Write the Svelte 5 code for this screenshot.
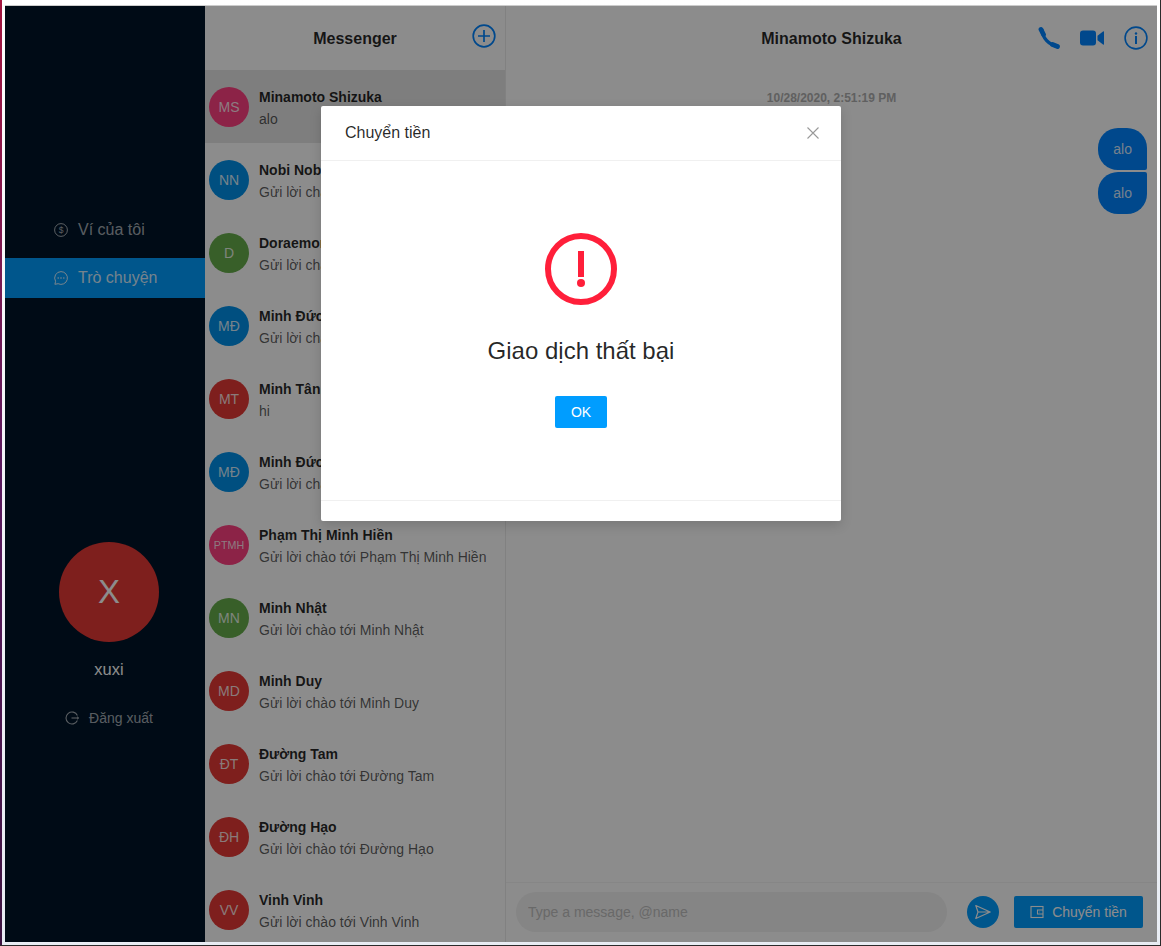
<script>
  const rows = [
    { i: 'MS', n: 'Minamoto Shizuka', m: 'alo', c: 'pink', on: true },
    { i: 'NN', n: 'Nobi Nobita', m: 'Gửi lời chào tới Nobi Nobita', c: 'blue' },
    { i: 'D', n: 'Doraemon', m: 'Gửi lời chào tới Doraemon', c: 'green' },
    { i: 'MĐ', n: 'Minh Đức', m: 'Gửi lời chào tới Minh Đức', c: 'blue' },
    { i: 'MT', n: 'Minh Tân', m: 'hi', c: 'red' },
    { i: 'MĐ', n: 'Minh Đức', m: 'Gửi lời chào tới Minh Đức', c: 'blue' },
    { i: 'PTMH', n: 'Phạm Thị Minh Hiền', m: 'Gửi lời chào tới Phạm Thị Minh Hiền', c: 'pink', small: true },
    { i: 'MN', n: 'Minh Nhật', m: 'Gửi lời chào tới Minh Nhật', c: 'green' },
    { i: 'MD', n: 'Minh Duy', m: 'Gửi lời chào tới Minh Duy', c: 'red' },
    { i: 'ĐT', n: 'Đường Tam', m: 'Gửi lời chào tới Đường Tam', c: 'red' },
    { i: 'ĐH', n: 'Đường Hạo', m: 'Gửi lời chào tới Đường Hạo', c: 'red' },
    { i: 'VV', n: 'Vinh Vinh', m: 'Gửi lời chào tới Vinh Vinh', c: 'red' }
  ];
</script>

<div class="screen">
  <div class="app">
    <aside class="side">
      <nav class="nav">
        <div class="item">
          <svg width="14" height="14" viewBox="0 0 14 14" fill="none" stroke="currentColor"><circle cx="7" cy="7" r="6.4" stroke-width="1"/><text x="7" y="10" font-size="8.5" text-anchor="middle" fill="currentColor" stroke="none" font-family="Liberation Sans">$</text></svg>
          <span>Ví của tôi</span>
        </div>
        <div class="item active">
          <svg width="14" height="14" viewBox="0 0 14 14" fill="none" stroke="currentColor"><path d="M7 .6a6.4 6.4 0 1 1-2.9 12.1L.9 13.3l.7-3A6.4 6.4 0 0 1 7 .6z" stroke-width="1"/><circle cx="4.2" cy="7" r=".8" fill="currentColor" stroke="none"/><circle cx="7" cy="7" r=".8" fill="currentColor" stroke="none"/><circle cx="9.8" cy="7" r=".8" fill="currentColor" stroke="none"/></svg>
          <span>Trò chuyện</span>
        </div>
      </nav>
      <div class="me">
        <div class="me-av">X</div>
        <div class="me-name">xuxi</div>
        <div class="logout">
          <svg width="14" height="14" viewBox="0 0 14 14" fill="none" stroke="currentColor" stroke-width="1.1"><path d="M12.4 4.4A6 6 0 1 0 12.4 9.6"/><path d="M6.5 7h7"/><path d="M12 5.6 13.6 7 12 8.4" stroke-width=".9"/></svg>
          <span>Đăng xuất</span>
        </div>
      </div>
    </aside>

    <section class="list">
      <header class="list-head">
        <h2>Messenger</h2>
        <svg class="plus" width="24" height="24" viewBox="0 0 24 24" fill="none" stroke="#0084ff" stroke-width="1.7"><circle cx="12" cy="12" r="10.8"/><path d="M12 6v12M6 12h12"/></svg>
      </header>
      <div class="rows">
        {#each rows as r}
          <div class="row" class:on={r.on}>
            <div class="av {r.c}" class:small={r.small}>{r.i}</div>
            <div class="txt">
              <div class="name">{r.n}</div>
              <div class="msg">{r.m}</div>
            </div>
          </div>
        {/each}
      </div>
    </section>

    <section class="chat">
      <header class="chat-head">
        <span></span>
        <h2>Minamoto Shizuka</h2>
        <div class="tools">
          <svg width="22" height="22" viewBox="0 0 22 22" fill="none" stroke="#0084ff" stroke-linecap="round"><path d="M4 3C4.500 11 11 18 19 19" stroke-width="3.400"/><path d="M3 2.500 5.500 7.500M14.500 17.500 19.500 19.500" stroke-width="4.800"/></svg>
          <svg width="24" height="16" viewBox="0 0 24 16" fill="#0084ff"><rect x="0" y="0.500" width="16" height="15" rx="3"/><path d="M17.500 5.800 23 1.500q1-.6 1 .6v11.800q0 1.200-1 .6l-5.500-4.300z"/></svg>
          <svg width="24" height="24" viewBox="0 0 24 24" fill="none" stroke="#0084ff" stroke-width="1.600"><circle cx="12" cy="12" r="10.900"/><rect x="11" y="10" width="2" height="8" fill="#0084ff" stroke="none"/><circle cx="12" cy="7.500" r="1.200" fill="#0084ff" stroke="none"/></svg>
        </div>
      </header>
      <div class="thread">
        <div class="stamp">10/28/2020, 2:51:19 PM</div>
        <div class="bubble first">alo</div>
        <div class="bubble last">alo</div>
      </div>
      <footer class="composer">
        <input class="field" type="text" placeholder="Type a message, @name" />
        <button class="send" aria-label="Gửi">
          <svg width="16" height="16" viewBox="0 0 16 16" fill="none" stroke="#fff" stroke-width="1.200" stroke-linejoin="round"><path d="M.8 1.500 15.200 8 .8 14.500 3 8zM3 8h12"/></svg>
        </button>
        <button class="pay">
          <svg width="14" height="14" viewBox="0 0 14 14" fill="none" stroke="#fff" stroke-width="1.100"><rect x="1" y="1.500" width="12" height="11"/><path d="M13 5H7.500v4H13M9.500 7h.6"/></svg>
          <span>Chuyển tiền</span>
        </button>
      </footer>
    </section>

    <div class="mask">
      <div class="modal">
        <div class="m-head">
          <span>Chuyển tiền</span>
          <svg width="14" height="14" viewBox="0 0 14 14" stroke="#999" stroke-width="1.100"><path d="M1.500 1.500l11 11M12.500 1.500l-11 11"/></svg>
        </div>
        <div class="m-body">
          <svg width="72" height="72" viewBox="0 0 72 72" fill="none"><circle cx="36" cy="36" r="33" stroke="#ff1f3a" stroke-width="6"/><rect x="33" y="18" width="6" height="26" fill="#ff1f3a"/><circle cx="36" cy="50" r="4" fill="#ff1f3a"/></svg>
          <p>Giao dịch thất bại</p>
          <button class="ok">OK</button>
        </div>
        <div class="m-foot"></div>
      </div>
    </div>
  </div>
</div>

<style>
  :global(body) { margin: 0; font-family: "Liberation Sans", Arial, sans-serif; }
  .screen {
    box-sizing: border-box; width: 1161px; height: 946px;
    background: linear-gradient(180deg, #a3163f, #5a1a5e 50%, #3d1440) 0 0 / 2px 100% no-repeat, linear-gradient(180deg, #fff, #e8ecf3);
    padding: 5px 3px 3px 5px;
    border-right: 1px solid #2b2b2b; border-bottom: 1px solid #2b2b2b;
  }
  .app {
    position: relative; display: flex; height: 937px; box-sizing: border-box;
    border-top: 1px solid #ccc; background: #fff; overflow: hidden; color: rgba(0,0,0,.85);
    font-size: 14px;
  }
  .side { width: 200px; flex: none; background: #001529; color: rgba(255,255,255,.65); }
  .nav { padding-top: 204px; display: flex; flex-direction: column; gap: 8px; }
  .item { height: 40px; display: flex; align-items: center; gap: 10px; padding-left: 49px; font-size: 16px; }
  .item svg { flex: none; }
  .item.active { background: #009dff; color: rgba(255,255,255,.85); }
  .me { margin-top: 244px; padding-left: 8px; display: flex; flex-direction: column; align-items: center; }
  .me-av { width: 100px; height: 100px; border-radius: 50%; background: #e53935; color: #fff; font-size: 33px; display: flex; align-items: center; justify-content: center; }
  .me-name { margin-top: 17px; font-size: 16.500px; line-height: 20px; color: #fff; }
  .logout { margin-top: 29px; display: flex; align-items: center; gap: 10px; height: 20px; }

  .list { width: 301px; flex: none; box-sizing: border-box; border-right: 1px solid #ececec; }
  .list-head { position: relative; height: 64px; display: flex; align-items: center; justify-content: center; }
  h2 { margin: 0; font-size: 16px; font-weight: 700; color: rgba(0,0,0,.85); }
  .list-head h2 { position: relative; top: 1px; }
  .plus { position: absolute; right: 9px; top: 18px; }
  .row { height: 73px; box-sizing: border-box; padding: 17px 0 0 4px; display: flex; gap: 10px; }
  .row.on { background: #e6e6e6; }
  .av { width: 40px; height: 40px; flex: none; border-radius: 50%; color: rgba(255,255,255,.85); display: flex; align-items: center; justify-content: center; font-size: 14px; }
  .av.small { font-size: 10.700px; }
  .pink { background: #ff4081; }
  .blue { background: #0091ea; }
  .green { background: #66ad4c; }
  .red { background: #e53935; }
  .txt { margin-top: -1px; }
  .name { font-weight: 700; line-height: 22px; white-space: nowrap; }
  .msg { line-height: 22px; white-space: nowrap; color: rgba(0,0,0,.65); }

  .chat { flex: 1; min-width: 0; display: flex; flex-direction: column; }
  .chat-head { height: 64px; flex: none; display: grid; grid-template-columns: 1fr auto 1fr; align-items: center; }
  .chat-head h2 { position: relative; top: 1px; }
  .tools { display: flex; align-items: center; justify-content: flex-end; gap: 20px; padding-right: 9px; }
  .thread { flex: 1; display: flex; flex-direction: column; align-items: flex-end; gap: 2px; padding: 20px 10px 0 0; min-height: 0; }
  .stamp { align-self: center; margin: 0 0 20px 10px; font-size: 12px; line-height: 16px; font-weight: 700; color: #afafaf; }
  .bubble { box-sizing: border-box; height: 42px; padding: 11px 15px; line-height: 20px; background: #0084ff; color: rgba(255,255,255,.85); }
  .first { border-radius: 20px 20px 2px 20px; }
  .last { border-radius: 20px 2px 20px 20px; }
  .composer { height: 60px; flex: none; box-sizing: border-box; border-top: 1px solid #f5f5f5; display: flex; align-items: center; padding: 0 14px 2px 10px; }
  .field { box-sizing: border-box; width: 431px; height: 40px; border: 0; outline: 0; border-radius: 20px; background: #f2f2f2; padding: 0 12px; font: 14px "Liberation Sans", Arial, sans-serif; }
  .field::placeholder { color: #bfbfbf; opacity: 1; }
  button { border: 0; font-family: inherit; font-size: 14px; color: #fff; background: #009dff; }
  .send { width: 32px; height: 32px; border-radius: 50%; margin-left: 20px; padding: 0; display: flex; align-items: center; justify-content: center; }
  .pay { width: 129px; height: 32px; margin-left: 15px; border-radius: 2px; padding: 0; display: flex; align-items: center; justify-content: center; gap: 8px; }

  .mask { position: absolute; inset: 0; background: rgba(0,0,0,.45); padding-top: 100px; }
  .modal { width: 520px; margin: 0 auto; background: #fff; border-radius: 2px; box-shadow: 0 4px 12px rgba(0,0,0,.15); }
  .m-head { height: 55px; box-sizing: border-box; border-bottom: 1px solid #f0f0f0; display: flex; align-items: center; justify-content: space-between; padding: 0 21px 0 24px; font-size: 16px; }
  .m-body { height: 339px; box-sizing: border-box; padding-top: 72px; display: flex; flex-direction: column; align-items: center; }
  .m-body p { margin: 28px 0 27px; font-size: 24px; line-height: 36px; color: rgba(0,0,0,.85); }
  .ok { width: 52px; height: 32px; border-radius: 2px; padding: 0; }
  .m-foot { height: 21px; box-sizing: border-box; border-top: 1px solid #f0f0f0; }
</style>
